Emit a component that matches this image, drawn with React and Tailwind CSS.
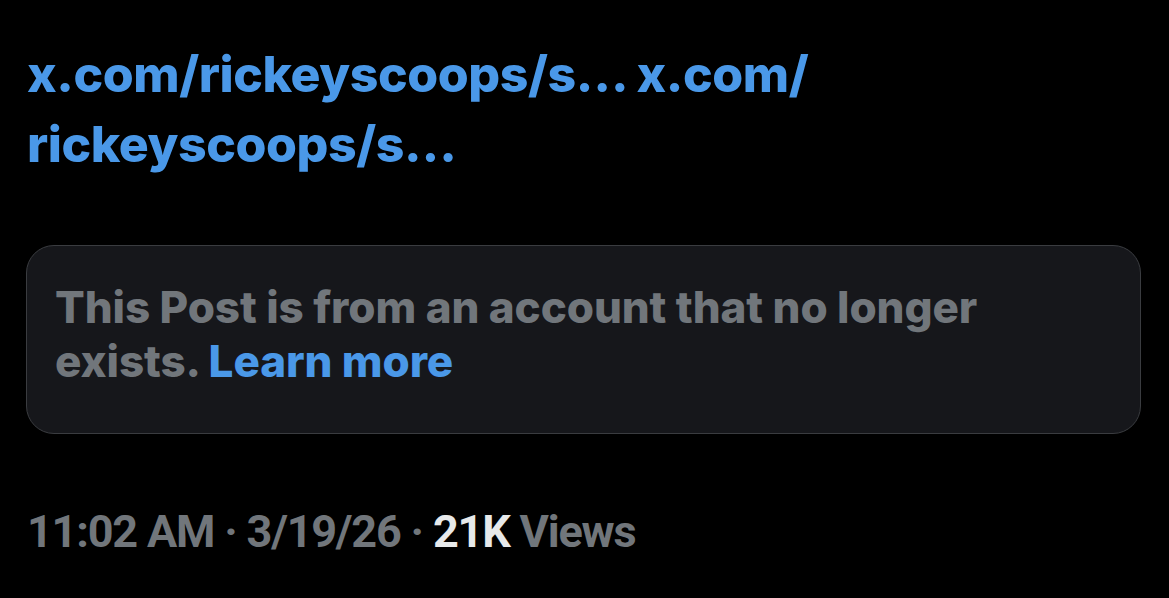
export default function App() {
  return (
    <div className="w-[1169px] h-[598px] bg-black overflow-hidden" style={{ fontFamily: 'Inter, "Noto Sans", sans-serif' }}>
      <div className="pl-[27px] pr-[28px] pt-[39px]">
        <div className="text-[#4a98e8] text-[50px] font-extrabold leading-[70px] tracking-[-0.45px] w-[840px]">
          x.com/rickeyscoops/s… x.com/ rickeyscoops/s…
        </div>
        <div className="mt-[66px] ml-[-1px] w-[1115px] h-[189px] rounded-[28px] border border-[#3a3c40] bg-[#16171b] px-[28px] pt-[34px]">
          <div className="text-[#71767b] text-[44px] font-extrabold leading-[54px] tracking-[-0.1px] w-[1000px]">
            This Post is from an account that no longer exists. <span className="text-[#4a98e8]">Learn more</span>
          </div>
        </div>
        <div className="mt-[68px] text-[45px] font-bold leading-[60px] tracking-[-1.2px] text-[#71767b]" style={{ fontFamily: 'Roboto, sans-serif' }}>
          11:02 AM · 3/19/26 · <span className="text-[#e7e9ea]">21K</span> Views
        </div>
      </div>
    </div>
  );
}
